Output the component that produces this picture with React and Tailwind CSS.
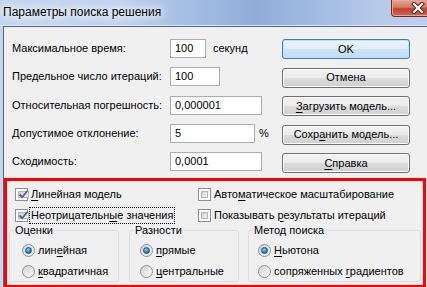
const ui = "font-['Tahoma','Liberation_Sans',Arial,sans-serif] text-[11px] leading-[13px] text-black";

const Check = ({ checked }) => (
  <span className="w-[13px] h-[13px] shrink-0 border border-[#8e8f8f] bg-white p-[2px] flex">
    <span className="flex-1 border border-[#b4b4b4] bg-gradient-to-br from-[#cbcfd5] to-[#f6f6f6] flex items-center justify-center">
      {checked && (
        <svg width="9" height="9" viewBox="0 0 9 9" className="overflow-visible">
          <path d="M0.5 4.5 L3.2 7.2 L8.5 0.8" fill="none" stroke="#4a5f97" strokeWidth="1.8" />
        </svg>
      )}
    </span>
  </span>
);

const Radio = ({ checked }) => (
  <span className="w-[13px] h-[13px] shrink-0 rounded-full border border-[#8e8f8f] bg-gradient-to-br from-[#cfd2d6] to-[#fbfbfb] flex items-center justify-center">
    {checked && (
      <span className="w-[7px] h-[7px] rounded-full border border-[#1c4f7e] bg-[radial-gradient(circle_at_40%_35%,#9fe0ff_0%,#2f8fd0_45%,#0d4f8a_100%)]" />
    )}
  </span>
);

const Btn = ({ children, def }) => (
  <div
    className={`h-[20px] rounded-[3px] border flex items-center justify-center ${
      def
        ? "border-[#3c7fb1] bg-[linear-gradient(#ecf4fa_0%,#e1eef8_50%,#cde3f3_50%,#c2dcef_100%)] shadow-[inset_0_0_0_1px_#bfe3f7]"
        : "border-[#707070] bg-[linear-gradient(#f2f2f2_0%,#ebebeb_50%,#dddddd_50%,#cfcfcf_100%)] shadow-[inset_0_0_0_1px_#fcfcfc]"
    }`}
  >
    {children}
  </div>
);

const Field = ({ label, value, w, suffix }) => (
  <div className="h-[19px] flex items-center">
    <span className="w-[158px] shrink-0">{label}</span>
    <div className={`h-[19px] ${w} border border-[#abadb3] border-t-[#abadb3] bg-white flex items-center pl-[4px]`}>
      {value}
    </div>
    {suffix}
  </div>
);

const U = ({ children }) => <span className="underline underline-offset-[2px]">{children}</span>;

const RadioRow = ({ checked, children }) => (
  <div className="h-[20px] flex items-center gap-[3px]">
    <Radio checked={checked} />
    <span>{children}</span>
  </div>
);

const Group = ({ title, className, pad, children }) => (
  <fieldset className={`h-[59px] border border-[#d5dfe5] rounded-[3px] ${className}`}>
    <legend className="ml-[4px] px-[1px] leading-[14px]">{title}</legend>
    <div className={`flex flex-col gap-[1.5px] pt-[3px] ${pad}`}>{children}</div>
  </fieldset>
);

export default function App() {
  return (
    <div className={`${ui} w-[427px] h-[287px] overflow-hidden flex flex-col bg-[#c5d6ec]`}>
      <div className="h-[25px] shrink-0 flex bg-[linear-gradient(90deg,#c4d6ef_0%,#c0d3ef_28%,#a7c0e5_42%,#8fadda_60%,#a3bce3_75%,#b6c9e9_88%,#bccfec_100%)]">
        <span className="pl-[3px] pt-[5px] text-[12px] leading-[15px] font-['Segoe_UI','Liberation_Sans',Arial,sans-serif] [text-shadow:0_0_6px_#fff,0_0_10px_#fff,0_0_14px_#fff]">
          Параметры поиска решения
        </span>
        <div className="ml-auto mr-[-12px] w-[48px] h-[17px] shrink-0 rounded-bl-[4px] border border-t-0 border-[#6b2a24] shadow-[inset_0_0_0_1px_#e9a596] bg-[linear-gradient(#e8a595_0%,#d57765_45%,#c2412f_55%,#d26a55_100%)] flex items-center justify-center">
          <svg width="14" height="12" viewBox="0 0 14 12" className="mr-[-6px]">
            <path d="M3 2 L11 10 M11 2 L3 10" stroke="#4a2a2a" strokeWidth="4.2" strokeLinecap="square" />
            <path d="M3 2 L11 10 M11 2 L3 10" stroke="#ffffff" strokeWidth="2.2" strokeLinecap="square" />
          </svg>
        </div>
      </div>
      <div className="h-px bg-[#dfe8f5] shrink-0" />
      <div className="flex-1 ml-[3px] border-l border-t border-[#55627c] bg-[#f0f0f0] flex flex-col">
        <div className="flex">
          <div className="w-[278px] shrink-0 pl-[8px] pt-[12px] flex flex-col gap-[9.25px]">
            <Field label="Максимальное время:" value="100" w="w-[36px]" suffix={<span className="ml-[7px]">секунд</span>} />
            <Field label="Предельное число итераций:" value="100" w="w-[50px]" />
            <Field label="Относительная погрешность:" value="0,000001" w="w-[92px]" />
            <Field label="Допустимое отклонение:" value="5" w="w-[85px]" suffix={<span className="ml-[4px]">%</span>} />
            <Field label="Сходимость:" value="0,0001" w="w-[92px]" />
          </div>
          <div className="w-[128px] shrink-0 pt-[12px] flex flex-col gap-[8.5px]">
            <Btn def>OK</Btn>
            <Btn>Отмена</Btn>
            <Btn>
              <span><U>З</U>агрузить модель...</span>
            </Btn>
            <Btn>
              <span>Сохр<U>а</U>нить модель...</span>
            </Btn>
            <Btn>
              <span><U>С</U>правка</span>
            </Btn>
          </div>
        </div>
        <div className="mt-[5px] w-[422px] h-[110px] shrink-0 border-[3px] border-[#ff0000] flex flex-col">
          <div className="grid grid-cols-[183px_1fr] gap-y-[3px] pl-[8px] pt-[4px]">
            <div className="h-[18px] flex items-center gap-[3px]">
              <Check checked />
              <span><U>Л</U>инейная модель</span>
            </div>
            <div className="h-[18px] flex items-center gap-[3px]">
              <Check />
              <span>Авто<U>м</U>атическое масштабирование</span>
            </div>
            <div className="h-[18px] flex items-center gap-[2px]">
              <Check checked />
              <span className="outline outline-1 outline-dotted outline-black px-[1px] leading-[15px]">
                Неотрицательн<U>ы</U>е значения
              </span>
            </div>
            <div className="h-[18px] flex items-center gap-[3px]">
              <Check />
              <span>Показывать <U>р</U>езультаты итераций</span>
            </div>
          </div>
          <div className="flex pl-[2px] gap-[10px] mt-[-1px]">
            <Group title="Оценки" className="w-[110px]" pad="pl-[12px]">
              <RadioRow checked>лин<U>е</U>йная</RadioRow>
              <RadioRow><U>к</U>вадратичная</RadioRow>
            </Group>
            <Group title="Разности" className="w-[110px]" pad="pl-[10px]">
              <RadioRow checked><U>п</U>рямые</RadioRow>
              <RadioRow><U>ц</U>ентральные</RadioRow>
            </Group>
            <Group title="Метод поиска" className="w-[173px] ml-[-1px]" pad="pl-[9px]">
              <RadioRow checked><U>Н</U>ьютона</RadioRow>
              <RadioRow>сопряженных <U>г</U>радиентов</RadioRow>
            </Group>
          </div>
        </div>
      </div>
    </div>
  );
}
